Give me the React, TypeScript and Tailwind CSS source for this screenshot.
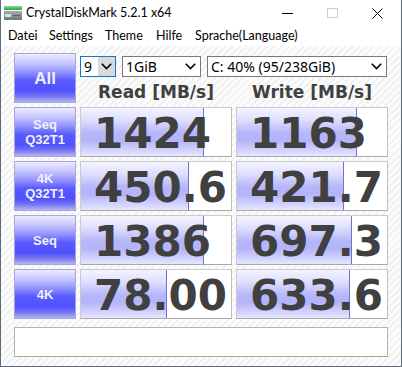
import React from "react";

const labelBg =
  "bg-[linear-gradient(to_bottom,#ececff_0%,#c8c8ff_18%,#9292ff_38%,#5a5aff_55%,#5050ff_76%,#7474f2_88%,#b4b4f2_100%)]";
const barBg =
  "bg-[linear-gradient(to_bottom,#f4f4ff_0%,#dedeff_25%,#b6b6fa_52%,#b4b4fb_68%,#d2d2ff_88%,#e6e6ff_100%)]";

function Chevron() {
  return (
    <svg width="11" height="7" viewBox="0 0 11 7" className="block">
      <polyline points="0.8,0.8 5.5,5.5 10.2,0.8" fill="none" stroke="#000" strokeWidth="1.6" />
    </svg>
  );
}

function Label({ lines, big }: { lines: string[]; big?: boolean }) {
  return (
    <div
      className={`h-[50px] border border-[#a6a6dc] ${labelBg} flex flex-col items-center justify-center text-[#f0f0f8] font-bold font-['Liberation_Sans',sans-serif] ${
        big ? "text-[17px] leading-[19px]" : "text-[13px] leading-[15px]"
      }`}
    >
      {lines.map((l) => (
        <span key={l}>{l}</span>
      ))}
    </div>
  );
}

function Value({ text, bar }: { text: string; bar: number }) {
  return (
    <div className="h-[50px] relative bg-white border border-[#cacaca] border-b-[#a9a9a9] border-r-[#bdbdbd] flex items-center">
      <div
        className={`absolute left-0 top-0 bottom-0 ${barBg} border-r border-[#7272cc]`}
        style={{ width: bar }}
      />
      <span className="relative pl-[13px] pt-[3px] text-[42px] leading-none font-bold text-[#404040] font-['DejaVu_Sans',sans-serif]">
        {text}
      </span>
    </div>
  );
}

export default function App() {
  const rows = [
    { label: ["Seq", "Q32T1"], r: "1424", rb: 123, w: "1163", wb: 120 },
    { label: ["4K", "Q32T1"], r: "450.6", rb: 108, w: "421.7", wb: 107 },
    { label: ["Seq"], r: "1386", rb: 123, w: "697.3", wb: 115 },
    { label: ["4K"], r: "78.00", rb: 86, w: "633.6", wb: 113 },
  ];
  const menu: [string, string][] = [
    ["Datei", "w-[41px]"],
    ["Settings", "w-[56px]"],
    ["Theme", "w-[51px]"],
    ["Hilfe", "w-[39px]"],
    ["Sprache(Language)", "w-[110px]"],
  ];
  return (
    <div className="w-[402px] h-[367px] bg-white flex flex-col border-l border-r border-b border-[#5f6a78] font-['Noto_Sans','Open_Sans',sans-serif] text-black overflow-hidden">
      {/* title bar */}
      <div className="h-[26px] flex items-center relative shrink-0">
        <svg width="18" height="15" viewBox="0 0 18 15" className="ml-[3px] mt-[1px]">
          <defs>
            <linearGradient id="g1" x1="0" y1="0" x2="0" y2="1">
              <stop offset="0" stopColor="#7ddc8e" />
              <stop offset="1" stopColor="#2f9e4c" />
            </linearGradient>
            <linearGradient id="g2" x1="0" y1="0" x2="0" y2="1">
              <stop offset="0" stopColor="#a4aeb4" />
              <stop offset="1" stopColor="#6c777e" />
            </linearGradient>
          </defs>
          <rect x="0" y="0" width="18" height="4" fill="url(#g1)" />
          <rect x="0" y="5" width="18" height="9" fill="url(#g2)" />
          <rect x="1" y="8" width="6" height="3" fill="#cfe9d4" />
          <rect x="9" y="9" width="7" height="1" fill="#5a646a" />
        </svg>
        <span className="ml-[4px] text-[12.5px] leading-none font-['Lato',sans-serif]">CrystalDiskMark 5.2.1 x64</span>
        <svg width="11" height="11" viewBox="0 0 11 11" className="absolute left-[281px] top-[8px]">
          <line x1="0" y1="5.5" x2="11" y2="5.5" stroke="#000" strokeWidth="1" />
        </svg>
        <svg width="11" height="11" viewBox="0 0 11 11" className="absolute left-[326px] top-[8px]">
          <rect x="0.5" y="0.5" width="10" height="9" fill="none" stroke="#cccccc" strokeWidth="1" />
        </svg>
        <svg width="11" height="11" viewBox="0 0 11 11" className="absolute left-[371px] top-[8px]">
          <line x1="0.5" y1="0.5" x2="10.5" y2="10.5" stroke="#000" strokeWidth="1" />
          <line x1="10.5" y1="0.5" x2="0.5" y2="10.5" stroke="#000" strokeWidth="1" />
        </svg>
      </div>
      {/* menu bar */}
      <div className="h-[20px] flex items-center shrink-0 pl-[7px] text-[12.5px] leading-none font-['Lato',sans-serif]">
        {menu.map(([m, w]) => (
          <span key={m} className={w}>
            {m}
          </span>
        ))}
      </div>
      {/* content */}
      <div className="flex-1 pt-[7px] pl-[13px] bg-[repeating-linear-gradient(135deg,#fcfcfc_0px,#fcfcfc_3px,#f1f1f1_3px,#f1f1f1_5px)]">
        <div className="grid grid-cols-[62px_152px_152px] auto-rows-[50px] gap-[4px]">
          <Label lines={["All"]} big />
          <div className="col-span-2 flex flex-col">
            <div className="flex mt-[3px] h-[21px] text-[14px] leading-none">
              <div className="w-[36px] h-[21px] border border-[#0a78d4] bg-white flex items-center">
                <span className="pl-[3px] flex-1">9</span>
                <div className="w-[17px] h-full bg-[#dadada] flex items-center justify-center">
                  <Chevron />
                </div>
              </div>
              <div className="ml-[6px] w-[79px] h-[21px] border border-[#7a7a7a] bg-white flex items-center justify-between pl-[3px] pr-[4px]">
                <span>1GiB</span>
                <Chevron />
              </div>
              <div className="ml-[6px] w-[180px] h-[21px] border border-[#7a7a7a] bg-white flex items-center justify-between pl-[3px] pr-[4px]">
                <span>C: 40% (95/238GiB)</span>
                <Chevron />
              </div>
            </div>
            <div className="grid grid-cols-[152px_152px] gap-[4px] mt-[5px] text-[17px] leading-[20px] font-bold text-[#404040] font-['DejaVu_Sans',sans-serif]">
              <div className="text-center">Read [MB/s]</div>
              <div className="text-center">Write [MB/s]</div>
            </div>
          </div>
          {rows.map((r) => (
            <React.Fragment key={r.r}>
              <Label lines={r.label} />
              <Value text={r.r} bar={r.rb} />
              <Value text={r.w} bar={r.wb} />
            </React.Fragment>
          ))}
          <div className="col-span-3 h-[30px] mt-[4px] bg-white border border-[#b4b4b4] border-b-[#a4a4a4]" />
        </div>
      </div>
    </div>
  );
}
